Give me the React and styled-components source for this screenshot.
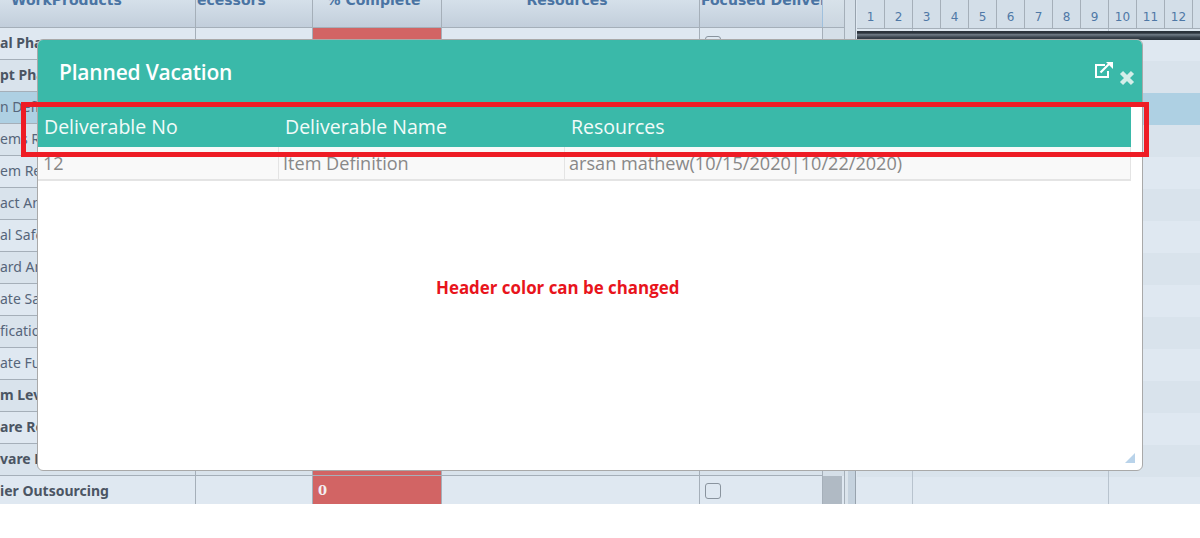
import React from "react";
import styled, { createGlobalStyle } from "styled-components";

const GlobalStyle = createGlobalStyle`
  html, body {
    margin: 0;
    padding: 0;
    background: #fff;
    overflow: hidden;
  }
`;

const ROWS = [
  { label: "al Phase", bold: true },
  { label: "pt Phase", bold: true },
  { label: "n Definition", selected: true },
  { label: "ems Re" },
  { label: "em Re" },
  { label: "act An" },
  { label: "al Safe" },
  { label: "ard An" },
  { label: "ate Sa" },
  { label: "fication" },
  { label: "ate Fu" },
  { label: "m Lev", bold: true },
  { label: "are Re", bold: true },
  { label: "vare R", bold: true },
  { label: "ier Outsourcing", bold: true, pct: "0", last: true },
];

const DAYS = [1, 2, 3, 4, 5, 6, 7, 8, 9, 10, 11, 12];

const COLUMNS = "196px 117px 129px 258px 123px 22px";

const rowBg = ({ $index, $selected }) => {
  if ($selected) return "#aed0e3";
  return $index % 2 === 0 ? "#dfe8f1" : "#d9e3ec";
};

const App = () => (
  <>
    <GlobalStyle />
    <Page>
      <GridPane>
        <GridHeader>
          <HeadCell>
            <HeadLabel $pad={11}>WorkProducts</HeadLabel>
          </HeadCell>
          <HeadCell>
            <HeadLabel $pad={1}>ecessors</HeadLabel>
          </HeadCell>
          <HeadCell $center>
            <HeadLabel>% Complete</HeadLabel>
          </HeadCell>
          <HeadCell $center>
            <HeadLabel>Resources</HeadLabel>
          </HeadCell>
          <HeadCell $edge>
            <HeadLabel $pad={1}>Focused Deliver</HeadLabel>
          </HeadCell>
          <ScrollHead />
        </GridHeader>
        {ROWS.map((row, i) => (
          <GridRow key={row.label} $index={i} $selected={row.selected} $last={row.last}>
            <NameCell $bold={row.bold} $last={row.last}>
              {row.label}
            </NameCell>
            <Cell />
            <PercentCell>{row.pct}</PercentCell>
            <Cell />
            <CheckCell>
              <CheckBox $last={row.last} />
            </CheckCell>
            <ScrollTrack $last={row.last} />
          </GridRow>
        ))}
      </GridPane>
      <Splitter>
        <SplitterTop />
      </Splitter>
      <GanttPane>
        <GanttHeader>
          {DAYS.map((d) => (
            <DayCell key={d}>{d}</DayCell>
          ))}
          <DayCell />
        </GanttHeader>
        <DarkBar />
        {ROWS.map((row, i) => (
          <GanttRow key={row.label} $index={i} $selected={row.selected} $last={row.last}>
            <GanttCell $width={56} />
            <GanttCell $width={196} />
            <GanttCell $open />
          </GanttRow>
        ))}
      </GanttPane>

      <Modal>
        <ModalHead>
          <ModalTitle>Planned Vacation</ModalTitle>
          <ModalIcons>
            <PopoutIcon viewBox="0 0 18 16">
              <path d="M10 3H1v12h12V9" fill="none" stroke="#fff" strokeWidth="2" />
              <path d="M5.5 10.5 14 2" fill="none" stroke="#fff" strokeWidth="2.2" />
              <path d="M11 0h7v7z" fill="#fff" />
            </PopoutIcon>
            <CloseIcon viewBox="0 0 16 16">
              <path d="M2.5 2.5 13.5 13.5M13.5 2.5 2.5 13.5" stroke="#d4eee9" strokeWidth="4.4" />
            </CloseIcon>
          </ModalIcons>
        </ModalHead>
        <ModalBody>
          <DetailTable>
            <DetailHead>
              <DetailHeadCell>Deliverable No</DetailHeadCell>
              <DetailHeadCell>Deliverable Name</DetailHeadCell>
              <DetailHeadCell>Resources</DetailHeadCell>
            </DetailHead>
            <DetailRow>
              <DetailCell>12</DetailCell>
              <DetailCell>Item Definition</DetailCell>
              <DetailCell>arsan mathew(10/15/2020|10/22/2020)</DetailCell>
            </DetailRow>
          </DetailTable>
          <Note>Header color can be changed</Note>
        </ModalBody>
        <ResizeHandle viewBox="0 0 10 10">
          <path d="M0 10 L10 0 L10 10 Z" fill="#b9d3ea" />
        </ResizeHandle>
      </Modal>
      <Callout />
    </Page>
  </>
);

const Page = styled.div`
  position: relative;
  display: flex;
  width: 1200px;
  height: 504px;
  overflow: hidden;
  font-family: "Noto Sans", sans-serif;
`;

const GridPane = styled.div`
  width: 845px;
  flex: none;
`;

const GridHeader = styled.div`
  display: grid;
  grid-template-columns: ${COLUMNS};
  height: 28px;
  box-sizing: border-box;
  background: linear-gradient(#d5e0ea, #c2cedb);
  border-bottom: 1px solid #a5afb9;
`;

const HeadCell = styled.div`
  overflow: hidden;
  padding-right: ${({ $center }) => ($center ? 7 : 0)}px;
  border-right: 1px solid ${({ $edge }) => ($edge ? "#9fc0dd" : "#a5afb9")};
  text-align: ${({ $center }) => ($center ? "center" : "left")};
  white-space: nowrap;
`;

const HeadLabel = styled.div`
  margin-top: -9px;
  padding-left: ${({ $pad }) => $pad || 0}px;
  font: bold 14px/18px "DejaVu Sans", sans-serif;
  color: #4a74a3;
`;

const ScrollHead = styled.div`
  border-right: 1px solid #a5afb9;
  background: linear-gradient(#d8e2ea, #cbd6e0);
`;

const GridRow = styled.div`
  display: grid;
  grid-template-columns: ${COLUMNS};
  height: ${({ $last }) => ($last ? 28 : 32)}px;
  box-sizing: border-box;
  background: ${rowBg};
  border-bottom: ${({ $last }) => ($last ? "none" : "1px solid #a5afb9")};
`;

const Cell = styled.div`
  border-right: 1px solid #a5afb9;
`;

const NameCell = styled(Cell)`
  display: flex;
  align-items: center;
  overflow: hidden;
  white-space: nowrap;
  padding-bottom: ${({ $last }) => ($last ? 0 : 2)}px;
  font-size: 14px;
  font-weight: ${({ $bold }) => ($bold ? 700 : 400)};
  color: ${({ $bold }) => ($bold ? "#4b5563" : "#56657a")};
`;

const PercentCell = styled(Cell)`
  display: flex;
  align-items: center;
  padding-left: 5px;
  background: #d26464;
  color: #f2eef2;
  font: bold 13px "DejaVu Serif", serif;
`;

const CheckCell = styled(Cell)`
  display: flex;
  align-items: center;
  padding-left: 5px;
`;

const CheckBox = styled.span`
  width: 16px;
  height: 16px;
  margin-top: ${({ $last }) => ($last ? 2 : 0)}px;
  box-sizing: border-box;
  border: 1px solid #8a949e;
  border-radius: 3px;
`;

const ScrollTrack = styled.div`
  margin-bottom: -1px;
  border-right: 1px solid #a5afb9;
  background: ${({ $last }) =>
    $last ? "linear-gradient(to right, #b0bac4 19px, #dfe8f1 19px)" : "#d5dfe8"};
`;

const Splitter = styled.div`
  width: 12px;
  flex: none;
  background: linear-gradient(
    to right,
    #dbe4ec 3px,
    #c5d2de 3px,
    #c5d2de 10px,
    #98a3ae 10px,
    #98a3ae 11px,
    #dfe8f1 11px
  );
`;

const SplitterTop = styled.div`
  width: 10px;
  height: 40px;
  background: #d5dfe8;
`;

const GanttPane = styled.div`
  flex: 1;
  min-width: 0;
`;

const GanttHeader = styled.div`
  display: flex;
  height: 29px;
  box-sizing: border-box;
  background: #d3dee8;
  border-bottom: 1px solid #a5afb9;
`;

const DayCell = styled.div`
  flex: none;
  width: 27px;
  padding-top: 9px;
  border-right: 1px solid #a5afb9;
  font: 12px/16px "DejaVu Sans", sans-serif;
  text-align: center;
  color: #4f78a6;
`;

const DarkBar = styled.div`
  position: relative;
  height: 9px;
  margin: 2px 0 -11px;
  background: linear-gradient(#2b333c 2px, #6f7a85 40%, #3a444f 70%, #2a323b);
`;

const GanttRow = styled.div`
  display: flex;
  height: ${({ $last }) => ($last ? 27 : 32)}px;
  background: ${rowBg};
`;

const GanttCell = styled.div`
  flex: ${({ $width }) => ($width ? `0 0 ${$width}px` : 1)};
  box-sizing: border-box;
  border-right: ${({ $open }) => ($open ? "none" : "1px solid #b8c3ce")};
`;

const Modal = styled.div`
  position: absolute;
  left: 37px;
  top: 39px;
  width: 1106px;
  height: 432px;
  box-sizing: border-box;
  border: 1px solid #a9a9a9;
  border-radius: 6px;
  background: #fff;
  overflow: hidden;
  font-family: "Open Sans", sans-serif;
`;

const ModalHead = styled.div`
  display: flex;
  align-items: center;
  justify-content: space-between;
  height: 67px;
  box-sizing: border-box;
  padding: 0 7px 4px 21px;
  background: #3ab9a9;
`;

const ModalTitle = styled.div`
  font-size: 21px;
  font-weight: 600;
  letter-spacing: -0.2px;
  color: #fff;
`;

const ModalIcons = styled.div`
  display: flex;
  align-items: flex-start;
  gap: 6px;
  margin-top: 6px;
`;

const PopoutIcon = styled.svg`
  width: 18px;
  height: 16px;
  margin-top: -1px;
`;

const CloseIcon = styled.svg`
  width: 16px;
  height: 16px;
  margin-top: 7px;
`;

const ModalBody = styled.div`
  padding-right: 11px;
`;

const DetailTable = styled.div`
  display: grid;
  grid-template-columns: 241px 286px 1fr;
`;

const DetailHead = styled.div`
  display: contents;
`;

const DetailHeadCell = styled.div`
  height: 40px;
  padding-left: 6px;
  background: #3ab9a9;
  color: #f2fbf9;
  font-size: 19.5px;
  line-height: 40px;
`;

const DetailRow = styled.div`
  display: contents;
`;

const DetailCell = styled.div`
  height: 34px;
  box-sizing: border-box;
  padding: 4px 0 0 4px;
  background: #f9f9f9;
  border: 1px solid #e4e4e4;
  border-width: 0 1px 2px 0;
  color: #888;
  font-size: 18.1px;
  line-height: 24px;

  &:first-child {
    padding-left: 5px;
  }
`;

const Note = styled.div`
  margin-top: 95px;
  margin-left: 398px;
  color: #e8141c;
  font-size: 16.9px;
  font-weight: 700;
`;

const ResizeHandle = styled.svg`
  position: absolute;
  right: 7px;
  bottom: 7px;
  width: 10px;
  height: 10px;
`;

const Callout = styled.div`
  position: absolute;
  left: 21px;
  top: 102px;
  width: 1128px;
  height: 55px;
  box-sizing: border-box;
  border: 5px solid #ee1c25;
`;

export default App;
